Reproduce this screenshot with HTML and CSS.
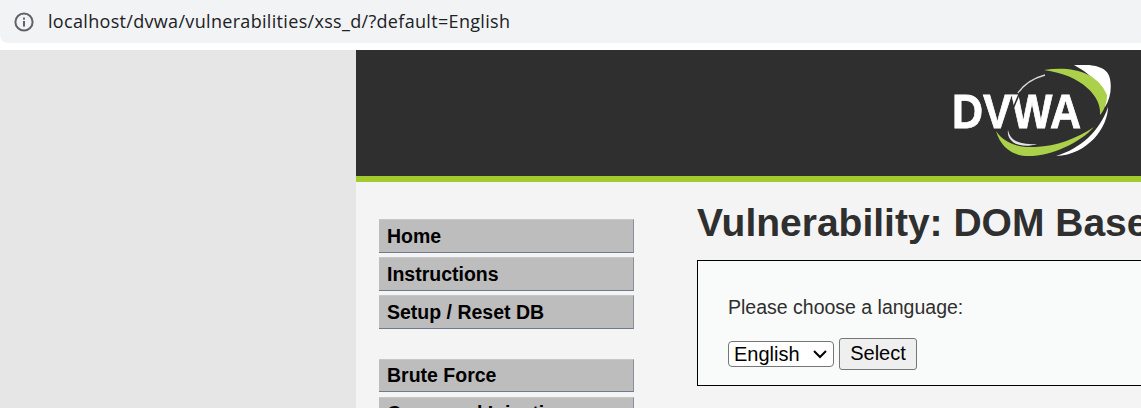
FILE: index.html
```html
<!DOCTYPE html>
<html>
<head>
    <title>Vulnerability: DOM Based Cross Site Scripting (XSS)</title>
    <link rel="stylesheet" href="styles.css">
</head>
<body>
    <div class="address-bar">
        <svg class="info-icon" width="20" height="20" viewBox="0 0 20 20">
            <circle cx="10" cy="10" r="8.6" fill="none" stroke="#5f6368" stroke-width="2"/>
            <rect x="9" y="9" width="2" height="5.6" fill="#5f6368"/>
            <rect x="9" y="5.6" width="2" height="2" fill="#5f6368"/>
        </svg>
        <span class="url">localhost/dvwa/vulnerabilities/xss_d/?default=English</span>
    </div>

    <div class="page">
        <div class="container">
            <div class="header">
                <svg class="logo" width="160" height="92" viewBox="0 0 160 92">
                    <g class="logo-soft">
                        <path d="M122 0 C140 -1 156 1 158 14 C160 24 158 34 153 42 C153 30 148 14 122 0 Z" fill="#fff"/>
                        <path d="M156 42 C156 62 136 90 104 91 C128 84 148 66 156 42 Z" fill="#fff"/>
                        <path d="M92 5 C118 1 145 6 155 30 C155 38 152 46 148 50 C150 32 130 10 92 5 Z" fill="#abd04a"/>
                        <path d="M44 66 C48 80 58 90 74 91 C98 92 128 78 142 62 C124 74 104 81 84 82 C66 83 52 78 44 66 Z" fill="#abd04a"/>
                        <path d="M93 10 C82 13 72 19 66 28" fill="none" stroke="#d8d8d8" stroke-width="1.5"/>
                        <path d="M56 65 C58 75 66 80 85 79 C70 84 54 78 56 65 Z" fill="#e4e4e4"/>
                        <text class="logo-text" x="0" y="63" textLength="129" lengthAdjust="spacingAndGlyphs">DVWA</text>
                        <path d="M68 27 L52 65" fill="none" stroke="#2f2f2f" stroke-width="1.6"/>
                    </g>
                </svg>
            </div>
            <div class="main">
                <div class="menu">
                    <ul class="menu-block">
                        <li>Home</li>
                        <li>Instructions</li>
                        <li>Setup / Reset DB</li>
                    </ul>
                    <ul class="menu-block">
                        <li>Brute Force</li>
                        <li>Command Injection</li>
                    </ul>
                </div>
                <div class="body-area">
                    <h1>Vulnerability: DOM Based Cross Site Scripting (XSS)</h1>
                    <div class="vulnerable-code">
                        <p>Please choose a language:</p>
                        <form class="lang-form">
                            <select class="lang-select">
                                <option>English</option>
                            </select>
                            <input class="select-btn" type="button" value="Select">
                        </form>
                    </div>
                </div>
            </div>
        </div>
    </div>
</body>
</html>
```

FILE: styles.css
```css
html, body {
    margin: 0;
    height: 408px;
    overflow: hidden;
    background: #fff;
}
body {
    font-family: "Liberation Sans", Arial, sans-serif;
}
.address-bar {
    height: 43px;
    background: #f1f3f4;
    border-bottom-left-radius: 8px;
    display: flex;
    align-items: center;
    padding-left: 14px;
    margin-bottom: 7px;
}
.info-icon {
    flex: none;
    margin-right: 14px;
}
.url {
    font-family: "Open Sans", sans-serif;
    font-size: 18px;
    line-height: 22px;
    letter-spacing: 0.32px;
    color: #202124;
    white-space: nowrap;
    padding-bottom: 2px;
}
.page {
    height: 358px;
    background: #e6e6e6;
    padding-left: 356px;
    overflow: hidden;
}
.container {
    width: 900px;
    height: 100%;
    background: #f4f4f4;
}
.header {
    height: 126px;
    background: #2f2f2f;
    border-bottom: 6px solid #a3cb2f;
    overflow: hidden;
}
.logo {
    display: block;
    margin: 15px 0 0 596px;
}
.logo-soft {
    filter: blur(0.7px);
}
.logo-text {
    font-family: "Liberation Sans", Arial, sans-serif;
    font-weight: bold;
    font-size: 49px;
    fill: #fff;
    stroke: #fff;
    stroke-width: 0.8px;
}
.main {
    display: flex;
    padding: 21px 0 0 23px;
}
.menu {
    width: 255px;
    flex: none;
    margin: 16px 63px 0 0;
}
.menu-block {
    list-style: none;
    margin: 0 0 30px;
    padding: 0;
}
.menu-block li {
    box-sizing: border-box;
    height: 34px;
    line-height: 32px;
    margin-bottom: 4px;
    padding-left: 8px;
    background: #bdbdbd;
    border-top: 1px solid #c8c8c8;
    border-right: 1px solid #8a8f9a;
    border-bottom: 1px solid #6d7a92;
    font-size: 19.5px;
    font-weight: bold;
    color: #000;
}
.menu-block + .menu-block li {
    height: 33px;
    line-height: 31px;
    margin-bottom: 5px;
}
.body-area {
    width: 500px;
    flex: none;
}
h1 {
    margin: 0 0 17px;
    font-size: 39px;
    line-height: 40px;
    font-weight: bold;
    color: #2f2f2f;
    white-space: nowrap;
}
.vulnerable-code {
    box-sizing: border-box;
    height: 126px;
    background: #f9fafa;
    border: 1px solid #000;
    padding: 35px 30px 0;
}
.vulnerable-code p {
    margin: 0 0 20px;
    font-size: 19.5px;
    line-height: 22px;
    color: #2f2f2f;
}
.lang-form {
    display: flex;
    align-items: center;
}
.lang-select {
    appearance: none;
    box-sizing: border-box;
    width: 106px;
    height: 26px;
    margin-right: 5px;
    padding: 0 0 0 5px;
    font-family: "Liberation Sans", Arial, sans-serif;
    font-size: 20px;
    color: #000;
    background: #fff url("data:image/svg+xml,%3Csvg xmlns='http://www.w3.org/2000/svg' width='14' height='9'%3E%3Cpath d='M1 1 L7 7 L13 1' fill='none' stroke='%23000' stroke-width='2'/%3E%3C/svg%3E") no-repeat 84px 8px;
    border: 1px solid #767676;
    border-radius: 4px;
}
.select-btn {
    box-sizing: border-box;
    width: 78px;
    height: 32px;
    padding: 0 0 2px;
    font-family: "Liberation Sans", Arial, sans-serif;
    font-size: 20px;
    color: #000;
    background: #efefef;
    border: 1px solid #767676;
    border-radius: 3px;
}
```
